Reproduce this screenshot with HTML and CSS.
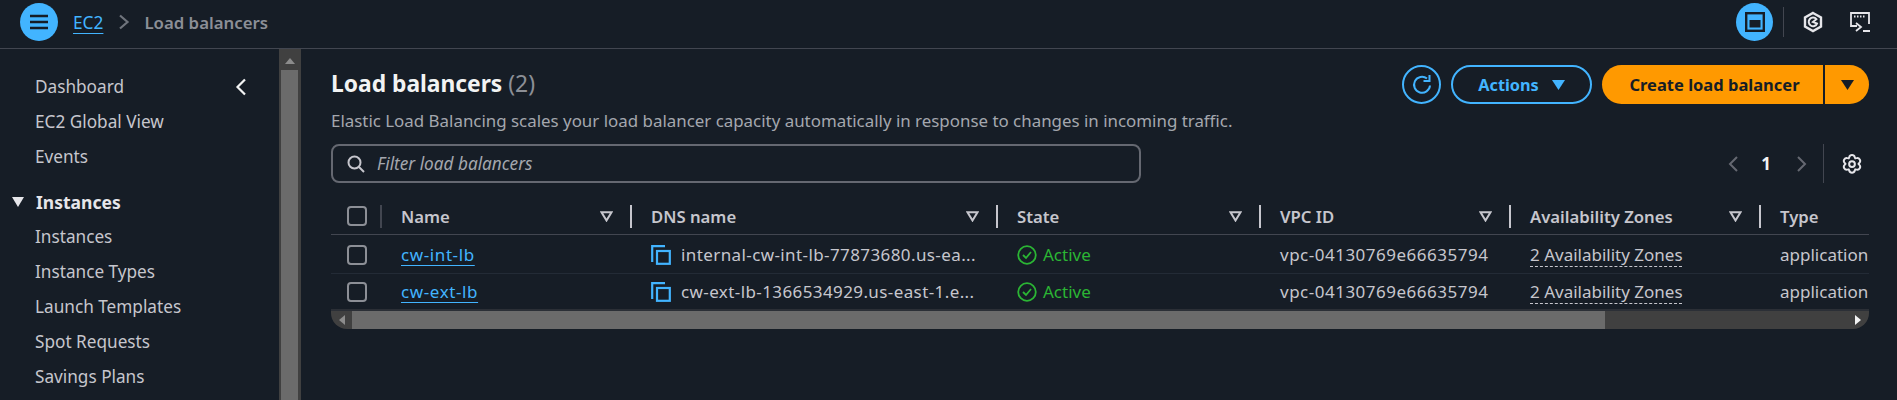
FILE: index.html
```html
<!DOCTYPE html>
<html lang="en">
<head>
<meta charset="utf-8">
<title>Load balancers</title>
<link rel="stylesheet" href="styles.css">
</head>
<body>
<header class="topbar">
  <button class="round-btn"><svg width="20" height="16" viewBox="0 0 20 16"><path d="M1 2h18M1 8h18M1 14h18" stroke="#161d26" stroke-width="2.6" fill="none"/></svg></button>
  <nav class="crumbs">
    <a class="link crumb-link">EC2</a>
    <svg class="crumb-chev" width="12" height="16" viewBox="0 0 12 16"><path d="M2 1.500 9.500 8 2 14.500" stroke="#6f747c" stroke-width="2.200" fill="none"/></svg>
    <span class="crumb-cur">Load balancers</span>
  </nav>
  <div class="top-right">
    <button class="round-btn small"><svg width="20" height="20" viewBox="0 0 20 20"><rect x="1.200" y="1.200" width="17.600" height="17.600" fill="none" stroke="#161d26" stroke-width="2.400"/><rect x="4.500" y="8" width="11" height="7.500" fill="#161d26"/></svg></button>
    <span class="top-sep"></span>
    <svg class="hex" width="20" height="22" viewBox="0 0 20 22"><path d="M10 2 18 6.500v9L10 20l-8-4.500v-9z" fill="none" stroke="#e6e6ea" stroke-width="2.400"/><path d="M14 12.500a4.300 4.300 0 1 1-.6-4.300L10 11z" fill="none" stroke="#e6e6ea" stroke-width="2"/></svg>
    <svg class="term" width="22" height="22" viewBox="0 0 22 22"><path d="M8 15H2V2h18v11" fill="none" stroke="#e6e6ea" stroke-width="1.800"/><path d="M5 5.500h1.500M8 5.500h1.500M11 5.500h1.500M14 5.500h1.500" stroke="#e6e6ea" stroke-width="1.800"/><path d="m7 12 5 4-5 4" fill="none" stroke="#e6e6ea" stroke-width="1.800"/><path d="M14 20h7" stroke="#e6e6ea" stroke-width="2"/></svg>
  </div>
</header>
<div class="shell">
  <aside class="sidebar">
    <ul class="nav-list">
      <li class="nav-item nav-first">Dashboard<svg width="12" height="18" viewBox="0 0 12 18"><path d="M10 1.500 2.500 9l7.500 7.500" fill="none" stroke="#f2f3f3" stroke-width="2.200"/></svg></li>
      <li class="nav-item">EC2 Global View</li>
      <li class="nav-item">Events</li>
    </ul>
    <div class="nav-section"><svg width="12" height="10" viewBox="0 0 12 10"><path d="M0 0h12L6 10z" fill="#e6e6ea"/></svg><span>Instances</span></div>
    <ul class="nav-list">
      <li class="nav-item">Instances</li>
      <li class="nav-item">Instance Types</li>
      <li class="nav-item">Launch Templates</li>
      <li class="nav-item">Spot Requests</li>
      <li class="nav-item">Savings Plans</li>
    </ul>
  </aside>
  <div class="vscroll">
    <svg class="vscroll-arrow" width="10" height="6" viewBox="0 0 10 6"><path d="M5 0l5 6H0z" fill="#8c8c8c"/></svg>
    <div class="vscroll-thumb"></div>
  </div>
  <main class="main">
    <section class="head">
      <div class="head-text">
        <h1 class="title">Load balancers <span class="count">(2)</span></h1>
      </div>
      <div class="actions">
        <button class="btn-icon"><svg width="24" height="24" viewBox="0 0 24 24"><path d="M20 12.500a8 8 0 1 1-3-7" fill="none" stroke="#42b4ff" stroke-width="2"/><path d="M19.500 2v6h-6" fill="none" stroke="#42b4ff" stroke-width="2"/></svg></button>
        <button class="btn-outline">Actions<svg width="13" height="10" viewBox="0 0 13 10"><path d="M0 0h13L6.500 10z" fill="#42b4ff"/></svg></button>
        <div class="split">
          <button class="btn-primary">Create load balancer</button>
          <button class="btn-drop"><svg width="13" height="10" viewBox="0 0 13 10"><path d="M0 0h13L6.500 10z" fill="#161d26"/></svg></button>
        </div>
      </div>
    </section>
    <p class="desc">Elastic Load Balancing scales your load balancer capacity automatically in response to changes in incoming traffic.</p>
    <section class="filter-row">
      <label class="filter">
        <svg width="18" height="18" viewBox="0 0 18 18"><circle cx="7.500" cy="7.500" r="6" fill="none" stroke="#c6c6cd" stroke-width="2"/><path d="m12 12 5 5" stroke="#c6c6cd" stroke-width="2"/></svg>
        <span class="filter-text">Filter load balancers</span>
      </label>
      <div class="pager">
        <svg width="12" height="18" viewBox="0 0 12 18"><path d="M10 2 3 9l7 7" fill="none" stroke="#656871" stroke-width="2"/></svg>
        <span class="page-num">1</span>
        <svg width="12" height="18" viewBox="0 0 12 18"><path d="m2 2 7 7-7 7" fill="none" stroke="#656871" stroke-width="2"/></svg>
        <span class="pager-sep"></span>
        <svg class="gear" width="20" height="20" viewBox="2 2 16 16"><path d="M7.800 2.200a2.300 2.300 0 0 1 4.400 0l.4 1 1.100-.2a2.300 2.300 0 0 1 2.200 3.800l-.7.800.7.800a2.300 2.300 0 0 1-2.200 3.800l-1.100-.2-.4 1a2.300 2.300 0 0 1-4.400 0l-.4-1-1.100.2a2.300 2.300 0 0 1-2.200-3.800l.7-.8-.7-.8A2.300 2.300 0 0 1 6.300 3l1.100.2z" transform="translate(0 2.300)" fill="none" stroke="#e6e6ea" stroke-width="1.600" stroke-linejoin="round"/><circle cx="10" cy="10" r="2.300" fill="none" stroke="#e6e6ea" stroke-width="1.600"/></svg>
      </div>
    </section>
    <section class="table">
      <div class="row row-head">
        <div class="cell-check"><span class="checkbox"></span></div>
        <div class="th th-first"><span>Name</span><svg width="13" height="11" viewBox="0 0 13 11"><path d="M1.500 1.200h10l-5 8.300z" fill="none" stroke="#c6c6cd" stroke-width="2"/></svg></div>
        <div class="th"><span>DNS name</span><svg width="13" height="11" viewBox="0 0 13 11"><path d="M1.500 1.200h10l-5 8.300z" fill="none" stroke="#c6c6cd" stroke-width="2"/></svg></div>
        <div class="th"><span>State</span><svg width="13" height="11" viewBox="0 0 13 11"><path d="M1.500 1.200h10l-5 8.300z" fill="none" stroke="#c6c6cd" stroke-width="2"/></svg></div>
        <div class="th"><span>VPC ID</span><svg width="13" height="11" viewBox="0 0 13 11"><path d="M1.500 1.200h10l-5 8.300z" fill="none" stroke="#c6c6cd" stroke-width="2"/></svg></div>
        <div class="th"><span>Availability Zones</span><svg width="13" height="11" viewBox="0 0 13 11"><path d="M1.500 1.200h10l-5 8.300z" fill="none" stroke="#c6c6cd" stroke-width="2"/></svg></div>
        <div class="th"><span>Type</span></div>
      </div>
      <div class="row row-body">
        <div class="cell-check"><span class="checkbox"></span></div>
        <div class="td"><a class="link row-link">cw-int-lb</a></div>
        <div class="td td-dns"><svg width="20" height="20" viewBox="0 0 20 20"><path d="M14 1.200H1.200V17" fill="none" stroke="#42b4ff" stroke-width="2.200"/><rect x="6" y="6" width="12.800" height="12.800" fill="none" stroke="#42b4ff" stroke-width="2.200"/></svg><span>internal-cw-int-lb-77873680.us-ea...</span></div>
        <div class="td td-state"><svg width="20" height="20" viewBox="0 0 20 20"><circle cx="10" cy="10" r="8.800" fill="none" stroke="#2bb534" stroke-width="1.800"/><path d="m6 10 3 3 5-6" fill="none" stroke="#2bb534" stroke-width="1.800"/></svg><span>Active</span></div>
        <div class="td td-vpc">vpc-04130769e66635794</div>
        <div class="td"><span class="dashed">2 Availability Zones</span></div>
        <div class="td">application</div>
      </div>
      <div class="row row-body row-last">
        <div class="cell-check"><span class="checkbox"></span></div>
        <div class="td"><a class="link row-link">cw-ext-lb</a></div>
        <div class="td td-dns"><svg width="20" height="20" viewBox="0 0 20 20"><path d="M14 1.200H1.200V17" fill="none" stroke="#42b4ff" stroke-width="2.200"/><rect x="6" y="6" width="12.800" height="12.800" fill="none" stroke="#42b4ff" stroke-width="2.200"/></svg><span>cw-ext-lb-1366534929.us-east-1.e...</span></div>
        <div class="td td-state"><svg width="20" height="20" viewBox="0 0 20 20"><circle cx="10" cy="10" r="8.800" fill="none" stroke="#2bb534" stroke-width="1.800"/><path d="m6 10 3 3 5-6" fill="none" stroke="#2bb534" stroke-width="1.800"/></svg><span>Active</span></div>
        <div class="td td-vpc">vpc-04130769e66635794</div>
        <div class="td"><span class="dashed">2 Availability Zones</span></div>
        <div class="td">application</div>
      </div>
      <div class="hscroll">
        <div class="hscroll-end"><svg width="6" height="10" viewBox="0 0 6 10"><path d="M6 0v10L0 5z" fill="#8c8c8c"/></svg></div>
        <div class="hscroll-thumb"></div>
        <div class="hscroll-track"><svg width="6" height="10" viewBox="0 0 6 10"><path d="M0 0v10l6-5z" fill="#f2f3f3"/></svg></div>
      </div>
    </section>
  </main>
</div>
</body>
</html>
```
FILE: styles.css
```css
* { box-sizing: border-box; }
html, body { margin: 0; height: 400px; overflow: hidden; }
body {
  background: #161d26;
  color: #c6c6cd;
  font-family: "Noto Sans", "Open Sans", sans-serif;
  font-size: 17px;
}
button { font-family: inherit; cursor: pointer; padding: 0; }
ul { list-style: none; margin: 0; padding: 0; }
h1, p { margin: 0; }
svg { flex: none; }

.topbar {
  height: 49px;
  border-bottom: 1px solid #424650;
  display: flex;
  align-items: flex-start;
  padding: 3px 0 0 20px;
}
.round-btn {
  width: 38px;
  height: 38px;
  border: 0;
  border-radius: 50%;
  background: #42b4ff;
  display: flex;
  align-items: center;
  justify-content: center;
}
.crumbs { display: flex; align-items: center; height: 38px; margin-left: 15px; }
.link { color: #42b4ff; text-decoration: underline; text-underline-offset: 4px; text-decoration-thickness: 1px; }
.crumb-link { font-size: 17.300px; }
.crumb-chev { margin: 0 14px 0 15px; }
.crumb-cur { color: #8c8f96; font-weight: 600; font-size: 16.800px; }
.top-right { margin-left: auto; display: flex; align-items: center; height: 38px; padding-right: 26px; }
.round-btn.small { width: 37px; height: 38px; }
.top-sep { width: 1px; height: 30px; background: #424650; margin: 0 19px 0 10px; }
.term { margin-left: 26px; }

.shell { display: flex; height: 351px; }
.sidebar { width: 279px; padding-top: 20px; flex: none; overflow: hidden; }
.nav-item { height: 35px; line-height: 35px; padding-left: 35px; font-size: 17.200px; color: #c6c6cd; }
.nav-first { display: flex; align-items: center; justify-content: space-between; padding-right: 32px; }
.nav-section {
  margin-top: 10px;
  height: 35px;
  display: flex;
  align-items: center;
  gap: 12px;
  padding-left: 12px;
  font-weight: 700;
  font-size: 17.500px;
  color: #e6e6ea;
}
.vscroll {
  width: 22px;
  flex: none;
  background: #404040;
  padding: 0 3px 0 2px;
  display: flex;
  flex-direction: column;
  align-items: center;
}
.vscroll-arrow { margin: 9px 0 6px; }
.vscroll-thumb { width: 100%; flex: 1; background: #6b6b6b; }

.main { flex: 1; padding: 16px 28px 0 30px; min-width: 0; }
.head { display: flex; justify-content: space-between; height: 39px; }
.head-text { display: flex; align-items: flex-start; padding-top: 1px; }
.title { font-size: 22.800px; font-weight: 700; color: #f2f3f3; line-height: 36px; height: 36px; }
.count { font-weight: 400; color: #8c8f96; }
.actions { display: flex; gap: 10px; }
.btn-icon {
  width: 39px; height: 39px; border-radius: 50%;
  border: 2px solid #42b4ff; background: transparent;
  display: flex; align-items: center; justify-content: center;
}
.btn-outline {
  width: 141px; height: 39px; border-radius: 20px;
  border: 2px solid #42b4ff; background: transparent;
  color: #42b4ff; font-weight: 700; font-size: 16.300px;
  display: flex; align-items: center; justify-content: center; gap: 13px;
}
.split { display: flex; gap: 2px; }
.btn-primary {
  width: 221px; height: 39px; border: 0; border-radius: 20px 0 0 20px;
  padding-left: 4px;
  background: #ff9900; color: #161d26; font-weight: 700; font-size: 16.500px;
}
.btn-drop {
  width: 44px; height: 39px; border: 0; border-radius: 0 20px 20px 0;
  background: #ff9900; display: flex; align-items: center; justify-content: center;
}
.desc { margin-top: 7px; height: 20px; line-height: 20px; font-size: 16.900px; color: #a4a7ae; white-space: nowrap; }

.filter-row { margin-top: 13px; display: flex; align-items: center; justify-content: space-between; height: 39px; }
.filter {
  width: 810px; height: 39px; border: 2px solid #656871; border-radius: 8px;
  display: flex; align-items: center; gap: 12px; padding-left: 14px;
}
.filter-text { font-style: italic; color: #a4a7ae; font-size: 17.200px; }
.pager { display: flex; align-items: center; height: 39px; padding-right: 7px; }
.page-num { font-weight: 700; color: #f2f3f3; margin: 0 25px 0 22px; font-size: 17px; }
.pager-sep { width: 1px; height: 39px; background: #424650; margin: 0 18px 0 15px; }

.table { margin-top: 13px; }
.row {
  display: grid;
  grid-template-columns: 49px 250px 366px 263px 250px 250px 109px;
  align-items: center;
  height: 39px;
  padding-top: 1px;
  border-bottom: 1px solid #232b36;
}
.row-head { padding-top: 2px; border-bottom-color: #424650; }
.row-last { height: 35px; padding-top: 0; border-bottom: 0; }
.cell-check { padding-left: 16px; display: flex; align-items: center; }
.checkbox { width: 20px; height: 20px; border: 2px solid #8c8f96; border-radius: 4px; display: block; }
.th {
  height: 23px;
  border-left: 2px solid #c6c6cd;
  padding: 0 17px 0 19px;
  display: flex;
  align-items: center;
  justify-content: space-between;
  font-weight: 600;
  font-size: 16.700px;
  color: #c6c6cd;
}
.th-first { border-left-color: #424650; }
.td { padding-left: 21px; font-size: 17px; line-height: 26px; white-space: nowrap; overflow: hidden; color: #c6c6cd; }
.td-dns, .td-state { display: flex; align-items: center; }
.td-dns { gap: 10px; letter-spacing: .4px; }
.td-state { gap: 6px; color: #2bb534; }
.td-vpc { letter-spacing: .5px; }
.row-link { letter-spacing: .6px; }
.dashed { text-decoration: underline dashed 1px #c6c6cd; text-underline-offset: 5px; }

.hscroll { display: flex; height: 20px; border-top: 2px solid #2b2f36; }
.hscroll-end {
  width: 21px; background: #404040; border-radius: 0 0 0 16px;
  display: flex; align-items: center; justify-content: center;
}
.hscroll-thumb { width: 1253px; background: #6b6b6b; }
.hscroll-track {
  flex: 1; background: #404040; border-radius: 0 0 16px 0;
  display: flex; align-items: center; justify-content: flex-end; padding-right: 8px;
}
```
